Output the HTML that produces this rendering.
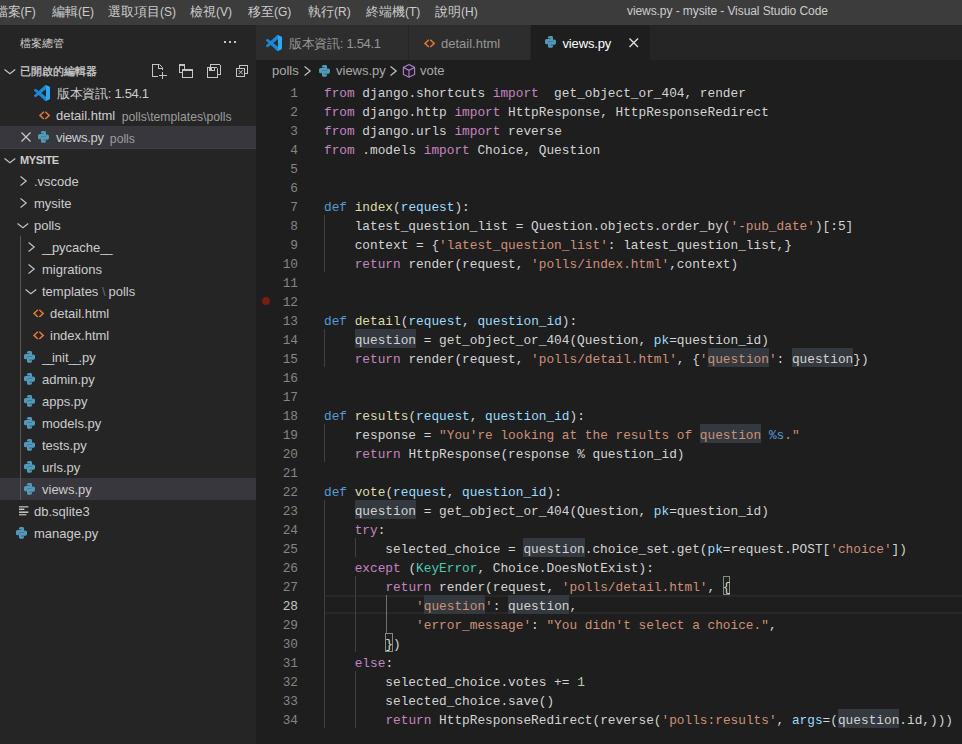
<!DOCTYPE html>
<html><head><meta charset="utf-8">
<style>
*{margin:0;padding:0;box-sizing:border-box}
html,body{width:962px;height:744px;overflow:hidden;background:#1e1e1e;font-family:"Liberation Sans",sans-serif;color:#cccccc}
.a{position:absolute;white-space:nowrap}
.ic{position:absolute;overflow:visible}
#title{position:absolute;left:0;top:0;width:962px;height:25px;background:#3c3c3c}
.m{position:absolute;top:4px;font-size:12px;line-height:15px;white-space:nowrap;color:#cccccc}
.cj{font-style:normal;font-size:12.8px}
#side{position:absolute;left:0;top:25px;width:256px;height:719px;background:#252526}
.u{letter-spacing:-2.3px}
.sel{position:absolute;left:0;width:256px;height:22px;background:#37373d}
.r{position:absolute;font-size:13px;line-height:16px;white-space:nowrap;color:#cccccc}
.desc{color:#9d9d9d;font-size:12.2px;margin-left:6.5px;position:relative;top:1px}
#tabs{position:absolute;left:256px;top:25px;width:706px;height:35px;background:#252526}
.tab{position:absolute;top:25px;height:35px;background:#2d2d2d}
.tt{position:absolute;font-size:13px;line-height:16px;white-space:nowrap;color:#969696}
.ln{position:absolute;left:256px;width:42px;text-align:right;color:#858585;height:19px;line-height:19px;font-family:"Liberation Mono",monospace;font-size:12.79px}
.ln.act{color:#c6c6c6}
.cl{position:absolute;left:324px;height:19px;line-height:19px;white-space:pre;color:#d4d4d4;font-family:"Liberation Mono",monospace;font-size:12.79px}
.k{color:#c586c0}.d{color:#569cd6}.f{color:#dcdcaa}.p{color:#9cdcfe}.s{color:#ce9178}.n{color:#b5cea8}.c{color:#4ec9b0}
.hlb{position:absolute;height:19px;background:#33393f}
.bmb{position:absolute;height:19px;border:1px solid #888888;background:#1b231b}
.ig{position:absolute;width:1px;background:#404040}
.ig.act{background:#707070}
.lhl{position:absolute;left:324px;top:595px;width:638px;height:19px;border-top:2px solid #282828;border-bottom:2px solid #282828}
.bp{position:absolute;left:261.5px;top:297px;width:8px;height:8px;border-radius:50%;background:#781c14}
</style></head><body>
<div id="title"></div>
<span class="m" style="left:-5.5px"><i class="cj">檔案</i>(F)</span>
<span class="m" style="left:52px"><i class="cj">編輯</i>(E)</span>
<span class="m" style="left:108px"><i class="cj">選取項目</i>(S)</span>
<span class="m" style="left:190px"><i class="cj">檢視</i>(V)</span>
<span class="m" style="left:248px"><i class="cj">移至</i>(G)</span>
<span class="m" style="left:308px"><i class="cj">執行</i>(R)</span>
<span class="m" style="left:366px"><i class="cj">終端機</i>(T)</span>
<span class="m" style="left:435px"><i class="cj">說明</i>(H)</span>
<span class="m" style="left:627px;letter-spacing:-0.08px">views.py - mysite - Visual Studio Code</span>

<div id="side"></div>
<span class="r" style="left:20px;top:35px;font-size:11px">檔案總管</span>
<span class="r" style="left:20px;top:63px;font-size:11px;font-weight:normal;-webkit-text-stroke:0.3px #cccccc">已開啟的編輯器</span>
<span class="r" style="left:57px;top:85.8px;letter-spacing:-0.3px">版本資訊: 1.54.1</span>
<span class="r" style="left:56px;top:107.8px">detail.html<span class="desc">polls\templates\polls</span></span>
<div class="sel" style="top:126px"></div>
<span class="r" style="left:56px;top:129.8px"><span style="letter-spacing:-0.25px">views.py</span><span class="desc" style="margin-left:6px">polls</span></span>
<div class="a" style="left:0;top:148px;width:256px;height:1px;background:#3f3f46"></div>
<span class="r" style="left:20px;top:152px;font-size:11px;font-weight:bold;letter-spacing:-0.35px">MYSITE</span>
<span class="r" style="left:34px;top:174px">.vscode</span>
<span class="r" style="left:34px;top:196px">mysite</span>
<span class="r" style="left:34px;top:218px">polls</span>
<span class="r" style="left:42px;top:240px"><span class="u">__</span>pycache<span class="u">__</span></span>
<span class="r" style="left:42px;top:262px">migrations</span>
<span class="r" style="left:42px;top:284px">templates<span style="color:#6b6b6b;padding:0 3px 0 3.5px">\</span>polls</span>
<span class="r" style="left:50px;top:306px">detail.html</span>
<span class="r" style="left:50px;top:328px">index.html</span>
<span class="r" style="left:42px;top:350px"><span class="u">__</span>init<span class="u">__</span>.py</span>
<span class="r" style="left:42px;top:372px">admin.py</span>
<span class="r" style="left:42px;top:394px">apps.py</span>
<span class="r" style="left:42px;top:416px">models.py</span>
<span class="r" style="left:42px;top:438px">tests.py</span>
<span class="r" style="left:42px;top:460px">urls.py</span>
<div class="sel" style="top:478px"></div>
<span class="r" style="left:42px;top:482px">views.py</span>
<span class="r" style="left:34px;top:504px">db.sqlite3</span>
<span class="r" style="left:34px;top:526px">manage.py</span>
<div class="a" style="left:20px;top:236px;width:1px;height:264px;background:#585858"></div>

<div id="tabs"></div>
<div class="tab" style="left:256px;width:152px"></div>
<div class="tab" style="left:409px;width:121px"></div>
<div class="tab" style="left:531px;width:119px;background:#1e1e1e"></div>
<span class="tt" style="left:289px;top:35.8px;letter-spacing:-0.3px">版本資訊: 1.54.1</span>
<span class="tt" style="left:441px;top:35.6px">detail.html</span>
<span class="tt" style="left:562.5px;top:35.6px;color:#ffffff;letter-spacing:-0.15px">views.py</span>

<span class="r" style="left:272px;top:63px;color:#a9a9a9">polls</span>
<span class="r" style="left:336px;top:63px;color:#a9a9a9">views.py</span>
<span class="r" style="left:420px;top:63px;color:#a9a9a9">vote</span>

<div class="lhl"></div>
<div class="ig" style="left:324px;top:215px;height:57px"></div>
<div class="ig" style="left:324px;top:329px;height:38px"></div>
<div class="ig" style="left:324px;top:424px;height:38px"></div>
<div class="ig" style="left:324px;top:500px;height:228px"></div>
<div class="ig" style="left:355px;top:538px;height:19px"></div>
<div class="ig" style="left:355px;top:576px;height:76px"></div>
<div class="ig" style="left:355px;top:671px;height:57px"></div>
<div class="ig act" style="left:386px;top:595px;height:38px"></div>
<div class="bp"></div>
<svg class="ic" style="left:0;top:0" width="256" height="100" viewBox="0 0 256 100"><g fill="#c5c5c5" shape-rendering="crispEdges"><rect x="152" y="64" width="1" height="13"/><rect x="152" y="64" width="7" height="1"/><rect x="158" y="64" width="1" height="5"/><rect x="158" y="68" width="5" height="1"/><rect x="162" y="68" width="1" height="2"/><rect x="152" y="76" width="6" height="1"/><rect x="159" y="75" width="8" height="1"/><rect x="162" y="72" width="1" height="7"/><rect x="179" y="64" width="6" height="2"/><rect x="179" y="64" width="1" height="9"/><rect x="184" y="64" width="1" height="5"/><rect x="179" y="72" width="3" height="1"/><rect x="182" y="69" width="11" height="2"/><rect x="182" y="69" width="1" height="9"/><rect x="192" y="69" width="1" height="9"/><rect x="182" y="77" width="11" height="1"/><rect x="210" y="64" width="10" height="1"/><rect x="210" y="64" width="1" height="3"/><rect x="220" y="65" width="1" height="10"/><rect x="218" y="74" width="3" height="1"/><rect x="207" y="67" width="10" height="1"/><rect x="207" y="67" width="1" height="11"/><rect x="217" y="69" width="1" height="9"/><rect x="207" y="77" width="11" height="1"/><rect x="209" y="67" width="6" height="4"/><rect x="239" y="65" width="9" height="1"/><rect x="239" y="65" width="1" height="3"/><rect x="247" y="65" width="1" height="9"/><rect x="245" y="73" width="3" height="1"/><rect x="236" y="68" width="9" height="1"/><rect x="236" y="68" width="1" height="9"/><rect x="244" y="68" width="1" height="9"/><rect x="236" y="76" width="9" height="1"/></g><rect x="212" y="68" width="2" height="2" fill="#252526" shape-rendering="crispEdges"/><g stroke="#c5c5c5" stroke-width="1" fill="none"><path d="M159.3 64.3L162.7 67.7"/><path d="M216.3 67.3L217.7 68.7"/><path d="M238.7 70.2L242.7 74.2M242.7 70.2L238.7 74.2"/></g><g fill="#c5c5c5"><rect x="224" y="41" width="2" height="2"/><rect x="229" y="41" width="2" height="2"/><rect x="234" y="41" width="2" height="2"/></g></svg>
<svg class="ic" style="left:4.4px;top:69.2px" width="12" height="6" viewBox="0 0 12 6"><path d="M0.55 0.55L5.9 4.7L11.25 0.55" stroke="#c5c5c5" stroke-width="1.15" fill="none"/></svg>
<svg class="ic" style="left:34px;top:85px" width="16" height="16" viewBox="0 0 100 100"><path fill="#1a88d6" d="M96.46 10.8L75.86.87a6.23 6.23 0 0 0-7.1 1.2L29.35 38.04 12.19 25.01a4.16 4.16 0 0 0-5.32.24L1.36 30.26a4.17 4.17 0 0 0 0 6.16L16.25 50 1.36 63.58a4.17 4.17 0 0 0 0 6.16l5.5 5a4.16 4.16 0 0 0 5.32.24l17.16-13.02L68.76 97.9a6.22 6.22 0 0 0 7.1 1.2l20.6-9.92A6.25 6.25 0 0 0 100 83.56V16.44a6.25 6.25 0 0 0-3.54-5.64zM75.01 72.7L45.11 50l29.9-22.7z"/><path fill="#2fa6f2" d="M75.86.87a6.23 6.23 0 0 0-7.1 1.2L75 4V96l-6.24 1.9a6.22 6.22 0 0 0 7.1 1.2l20.6-9.92A6.25 6.25 0 0 0 100 83.56V16.44a6.25 6.25 0 0 0-3.54-5.64z"/></svg>
<svg class="ic" style="left:38.5px;top:110.5px" width="12" height="9" viewBox="0 0 12 9"><path d="M4.9 0.8L1 4.4L4.9 8M6.3 0.8L10.2 4.4L6.3 8" fill="none" stroke="#e37933" stroke-width="1.5"/></svg>
<svg class="ic" style="left:21px;top:132px" width="10" height="10" viewBox="0 0 10 10"><path d="M0.5 0.5L9.5 9.5M9.5 0.5L0.5 9.5" stroke="#cccccc" stroke-width="1.2" fill="none"/></svg>
<svg class="ic" style="left:38px;top:131px" width="11" height="11.7" viewBox="0 0 11 11.7"><g fill="#519aba"><path d="M2.9 1.6Q2.9 0 4.5 0H6.5Q8 0 8 1.5V5.2Q8 5.8 7.4 5.8H3.8Q2.9 5.8 2.9 6.7V8.3H1.6Q0 8.3 0 6.7V4.6Q0 3 1.6 3H5.6V2.5H2.9Z"/><path d="M8.1 10.1Q8.1 11.7 6.5 11.7H4.5Q3 11.7 3 10.2V6.5Q3 5.9 3.6 5.9H7.2Q8.1 5.9 8.1 5V3.4H9.4Q11 3.4 11 5V7.1Q11 8.7 9.4 8.7H5.4V9.2H8.1Z"/></g></svg>
<svg class="ic" style="left:4px;top:157.8px" width="12" height="6" viewBox="0 0 12 6"><path d="M0.55 0.55L5.9 4.7L11.25 0.55" stroke="#c5c5c5" stroke-width="1.15" fill="none"/></svg>
<svg class="ic" style="left:19.9px;top:176px" width="7" height="10" viewBox="0 0 7 10"><path d="M0.55 0.55L6.2 5L0.55 9.45" stroke="#c5c5c5" stroke-width="1.15" fill="none"/></svg>
<svg class="ic" style="left:19.9px;top:198px" width="7" height="10" viewBox="0 0 7 10"><path d="M0.55 0.55L6.2 5L0.55 9.45" stroke="#c5c5c5" stroke-width="1.15" fill="none"/></svg>
<svg class="ic" style="left:17.1px;top:222.8px" width="12" height="6" viewBox="0 0 12 6"><path d="M0.55 0.55L5.9 4.7L11.25 0.55" stroke="#c5c5c5" stroke-width="1.15" fill="none"/></svg>
<svg class="ic" style="left:27.8px;top:241.8px" width="7" height="10" viewBox="0 0 7 10"><path d="M0.55 0.55L6.2 5L0.55 9.45" stroke="#c5c5c5" stroke-width="1.15" fill="none"/></svg>
<svg class="ic" style="left:27.8px;top:263.8px" width="7" height="10" viewBox="0 0 7 10"><path d="M0.55 0.55L6.2 5L0.55 9.45" stroke="#c5c5c5" stroke-width="1.15" fill="none"/></svg>
<svg class="ic" style="left:25.1px;top:288.8px" width="12" height="6" viewBox="0 0 12 6"><path d="M0.55 0.55L5.9 4.7L11.25 0.55" stroke="#c5c5c5" stroke-width="1.15" fill="none"/></svg>
<svg class="ic" style="left:33px;top:309px" width="12" height="9" viewBox="0 0 12 9"><path d="M4.9 0.8L1 4.4L4.9 8M6.3 0.8L10.2 4.4L6.3 8" fill="none" stroke="#e37933" stroke-width="1.5"/></svg>
<svg class="ic" style="left:33px;top:331px" width="12" height="9" viewBox="0 0 12 9"><path d="M4.9 0.8L1 4.4L4.9 8M6.3 0.8L10.2 4.4L6.3 8" fill="none" stroke="#e37933" stroke-width="1.5"/></svg>
<svg class="ic" style="left:24px;top:351.4px" width="11" height="11.7" viewBox="0 0 11 11.7"><g fill="#519aba"><path d="M2.9 1.6Q2.9 0 4.5 0H6.5Q8 0 8 1.5V5.2Q8 5.8 7.4 5.8H3.8Q2.9 5.8 2.9 6.7V8.3H1.6Q0 8.3 0 6.7V4.6Q0 3 1.6 3H5.6V2.5H2.9Z"/><path d="M8.1 10.1Q8.1 11.7 6.5 11.7H4.5Q3 11.7 3 10.2V6.5Q3 5.9 3.6 5.9H7.2Q8.1 5.9 8.1 5V3.4H9.4Q11 3.4 11 5V7.1Q11 8.7 9.4 8.7H5.4V9.2H8.1Z"/></g></svg>
<svg class="ic" style="left:24px;top:373.4px" width="11" height="11.7" viewBox="0 0 11 11.7"><g fill="#519aba"><path d="M2.9 1.6Q2.9 0 4.5 0H6.5Q8 0 8 1.5V5.2Q8 5.8 7.4 5.8H3.8Q2.9 5.8 2.9 6.7V8.3H1.6Q0 8.3 0 6.7V4.6Q0 3 1.6 3H5.6V2.5H2.9Z"/><path d="M8.1 10.1Q8.1 11.7 6.5 11.7H4.5Q3 11.7 3 10.2V6.5Q3 5.9 3.6 5.9H7.2Q8.1 5.9 8.1 5V3.4H9.4Q11 3.4 11 5V7.1Q11 8.7 9.4 8.7H5.4V9.2H8.1Z"/></g></svg>
<svg class="ic" style="left:24px;top:395.4px" width="11" height="11.7" viewBox="0 0 11 11.7"><g fill="#519aba"><path d="M2.9 1.6Q2.9 0 4.5 0H6.5Q8 0 8 1.5V5.2Q8 5.8 7.4 5.8H3.8Q2.9 5.8 2.9 6.7V8.3H1.6Q0 8.3 0 6.7V4.6Q0 3 1.6 3H5.6V2.5H2.9Z"/><path d="M8.1 10.1Q8.1 11.7 6.5 11.7H4.5Q3 11.7 3 10.2V6.5Q3 5.9 3.6 5.9H7.2Q8.1 5.9 8.1 5V3.4H9.4Q11 3.4 11 5V7.1Q11 8.7 9.4 8.7H5.4V9.2H8.1Z"/></g></svg>
<svg class="ic" style="left:24px;top:417.4px" width="11" height="11.7" viewBox="0 0 11 11.7"><g fill="#519aba"><path d="M2.9 1.6Q2.9 0 4.5 0H6.5Q8 0 8 1.5V5.2Q8 5.8 7.4 5.8H3.8Q2.9 5.8 2.9 6.7V8.3H1.6Q0 8.3 0 6.7V4.6Q0 3 1.6 3H5.6V2.5H2.9Z"/><path d="M8.1 10.1Q8.1 11.7 6.5 11.7H4.5Q3 11.7 3 10.2V6.5Q3 5.9 3.6 5.9H7.2Q8.1 5.9 8.1 5V3.4H9.4Q11 3.4 11 5V7.1Q11 8.7 9.4 8.7H5.4V9.2H8.1Z"/></g></svg>
<svg class="ic" style="left:24px;top:439.4px" width="11" height="11.7" viewBox="0 0 11 11.7"><g fill="#519aba"><path d="M2.9 1.6Q2.9 0 4.5 0H6.5Q8 0 8 1.5V5.2Q8 5.8 7.4 5.8H3.8Q2.9 5.8 2.9 6.7V8.3H1.6Q0 8.3 0 6.7V4.6Q0 3 1.6 3H5.6V2.5H2.9Z"/><path d="M8.1 10.1Q8.1 11.7 6.5 11.7H4.5Q3 11.7 3 10.2V6.5Q3 5.9 3.6 5.9H7.2Q8.1 5.9 8.1 5V3.4H9.4Q11 3.4 11 5V7.1Q11 8.7 9.4 8.7H5.4V9.2H8.1Z"/></g></svg>
<svg class="ic" style="left:24px;top:461.4px" width="11" height="11.7" viewBox="0 0 11 11.7"><g fill="#519aba"><path d="M2.9 1.6Q2.9 0 4.5 0H6.5Q8 0 8 1.5V5.2Q8 5.8 7.4 5.8H3.8Q2.9 5.8 2.9 6.7V8.3H1.6Q0 8.3 0 6.7V4.6Q0 3 1.6 3H5.6V2.5H2.9Z"/><path d="M8.1 10.1Q8.1 11.7 6.5 11.7H4.5Q3 11.7 3 10.2V6.5Q3 5.9 3.6 5.9H7.2Q8.1 5.9 8.1 5V3.4H9.4Q11 3.4 11 5V7.1Q11 8.7 9.4 8.7H5.4V9.2H8.1Z"/></g></svg>
<svg class="ic" style="left:24px;top:483.4px" width="11" height="11.7" viewBox="0 0 11 11.7"><g fill="#519aba"><path d="M2.9 1.6Q2.9 0 4.5 0H6.5Q8 0 8 1.5V5.2Q8 5.8 7.4 5.8H3.8Q2.9 5.8 2.9 6.7V8.3H1.6Q0 8.3 0 6.7V4.6Q0 3 1.6 3H5.6V2.5H2.9Z"/><path d="M8.1 10.1Q8.1 11.7 6.5 11.7H4.5Q3 11.7 3 10.2V6.5Q3 5.9 3.6 5.9H7.2Q8.1 5.9 8.1 5V3.4H9.4Q11 3.4 11 5V7.1Q11 8.7 9.4 8.7H5.4V9.2H8.1Z"/></g></svg>
<svg class="ic" style="left:19.3px;top:506.3px" width="10" height="10" viewBox="0 0 10 10"><g stroke-width="1.5"><path d="M0 0.8H9.4" stroke="#a8a8a8"/><path d="M0 3.3H5.4" stroke="#c8c8c8"/><path d="M0 6.2H9.4" stroke="#c8c8c8"/><path d="M0 8.7H7.4" stroke="#a8a8a8"/></g></svg>
<svg class="ic" style="left:16px;top:527px" width="11" height="11.7" viewBox="0 0 11 11.7"><g fill="#519aba"><path d="M2.9 1.6Q2.9 0 4.5 0H6.5Q8 0 8 1.5V5.2Q8 5.8 7.4 5.8H3.8Q2.9 5.8 2.9 6.7V8.3H1.6Q0 8.3 0 6.7V4.6Q0 3 1.6 3H5.6V2.5H2.9Z"/><path d="M8.1 10.1Q8.1 11.7 6.5 11.7H4.5Q3 11.7 3 10.2V6.5Q3 5.9 3.6 5.9H7.2Q8.1 5.9 8.1 5V3.4H9.4Q11 3.4 11 5V7.1Q11 8.7 9.4 8.7H5.4V9.2H8.1Z"/></g></svg>
<svg class="ic" style="left:266px;top:35px" width="16" height="16" viewBox="0 0 100 100"><path fill="#1a88d6" d="M96.46 10.8L75.86.87a6.23 6.23 0 0 0-7.1 1.2L29.35 38.04 12.19 25.01a4.16 4.16 0 0 0-5.32.24L1.36 30.26a4.17 4.17 0 0 0 0 6.16L16.25 50 1.36 63.58a4.17 4.17 0 0 0 0 6.16l5.5 5a4.16 4.16 0 0 0 5.32.24l17.16-13.02L68.76 97.9a6.22 6.22 0 0 0 7.1 1.2l20.6-9.92A6.25 6.25 0 0 0 100 83.56V16.44a6.25 6.25 0 0 0-3.54-5.64zM75.01 72.7L45.11 50l29.9-22.7z"/><path fill="#2fa6f2" d="M75.86.87a6.23 6.23 0 0 0-7.1 1.2L75 4V96l-6.24 1.9a6.22 6.22 0 0 0 7.1 1.2l20.6-9.92A6.25 6.25 0 0 0 100 83.56V16.44a6.25 6.25 0 0 0-3.54-5.64z"/></svg>
<svg class="ic" style="left:423.5px;top:38.5px" width="12" height="9" viewBox="0 0 12 9"><path d="M4.9 0.8L1 4.4L4.9 8M6.3 0.8L10.2 4.4L6.3 8" fill="none" stroke="#e37933" stroke-width="1.5"/></svg>
<svg class="ic" style="left:545px;top:36.2px" width="11" height="11.7" viewBox="0 0 11 11.7"><g fill="#519aba"><path d="M2.9 1.6Q2.9 0 4.5 0H6.5Q8 0 8 1.5V5.2Q8 5.8 7.4 5.8H3.8Q2.9 5.8 2.9 6.7V8.3H1.6Q0 8.3 0 6.7V4.6Q0 3 1.6 3H5.6V2.5H2.9Z"/><path d="M8.1 10.1Q8.1 11.7 6.5 11.7H4.5Q3 11.7 3 10.2V6.5Q3 5.9 3.6 5.9H7.2Q8.1 5.9 8.1 5V3.4H9.4Q11 3.4 11 5V7.1Q11 8.7 9.4 8.7H5.4V9.2H8.1Z"/></g></svg>
<svg class="ic" style="left:629px;top:38.4px" width="9.5" height="9.5" viewBox="0 0 9.5 9.5"><path d="M0.5 0.5L9.0 9.0M9.0 0.5L0.5 9.0" stroke="#e0e0e0" stroke-width="1.4" fill="none"/></svg>
<svg class="ic" style="left:303.9px;top:66.1px" width="7" height="10" viewBox="0 0 7 10"><path d="M0.55 0.55L6.2 5L0.55 9.45" stroke="#c5c5c5" stroke-width="1.15" fill="none"/></svg>
<svg class="ic" style="left:319px;top:65px" width="11" height="11.7" viewBox="0 0 11 11.7"><g fill="#519aba"><path d="M2.9 1.6Q2.9 0 4.5 0H6.5Q8 0 8 1.5V5.2Q8 5.8 7.4 5.8H3.8Q2.9 5.8 2.9 6.7V8.3H1.6Q0 8.3 0 6.7V4.6Q0 3 1.6 3H5.6V2.5H2.9Z"/><path d="M8.1 10.1Q8.1 11.7 6.5 11.7H4.5Q3 11.7 3 10.2V6.5Q3 5.9 3.6 5.9H7.2Q8.1 5.9 8.1 5V3.4H9.4Q11 3.4 11 5V7.1Q11 8.7 9.4 8.7H5.4V9.2H8.1Z"/></g></svg>
<svg class="ic" style="left:390.2px;top:66.1px" width="7" height="10" viewBox="0 0 7 10"><path d="M0.55 0.55L6.2 5L0.55 9.45" stroke="#c5c5c5" stroke-width="1.15" fill="none"/></svg>
<svg class="ic" style="left:402px;top:64px" width="14" height="14" viewBox="0 0 14 14"><g fill="none" stroke="#b180d7" stroke-width="1.1"><path d="M7 0.6L12.6 3.4V10.4L7 13.2L1.4 10.4V3.4Z"/><path d="M1.4 3.4L7 6.3L12.6 3.4M7 6.3V13.2"/></g></svg>
<div class="hlb" style="left:354.68px;top:329px;width:61.36px"></div>
<div class="hlb" style="left:707.50px;top:348px;width:61.36px"></div>
<div class="hlb" style="left:791.87px;top:348px;width:61.36px"></div>
<div class="hlb" style="left:699.83px;top:424px;width:61.36px"></div>
<div class="hlb" style="left:354.68px;top:500px;width:61.36px"></div>
<div class="hlb" style="left:523.42px;top:538px;width:61.36px"></div>
<div class="bmb" style="left:722.84px;top:576px;width:7.67px"></div>
<div class="hlb" style="left:423.71px;top:595px;width:61.36px"></div>
<div class="hlb" style="left:508.08px;top:595px;width:61.36px"></div>
<div class="bmb" style="left:385.36px;top:633px;width:7.67px"></div>
<div class="hlb" style="left:837.89px;top:709px;width:61.36px"></div>
<div class="ln" style="top:84px">1</div>
<div class="cl" style="top:84px"><span class="k">from</span> django.shortcuts <span class="k">import</span>  get_object_or_404, render</div>
<div class="ln" style="top:103px">2</div>
<div class="cl" style="top:103px"><span class="k">from</span> django.http <span class="k">import</span> HttpResponse, HttpResponseRedirect</div>
<div class="ln" style="top:122px">3</div>
<div class="cl" style="top:122px"><span class="k">from</span> django.urls <span class="k">import</span> reverse</div>
<div class="ln" style="top:141px">4</div>
<div class="cl" style="top:141px"><span class="k">from</span> .models <span class="k">import</span> Choice, Question</div>
<div class="ln" style="top:160px">5</div>
<div class="cl" style="top:160px"></div>
<div class="ln" style="top:179px">6</div>
<div class="cl" style="top:179px"></div>
<div class="ln" style="top:198px">7</div>
<div class="cl" style="top:198px"><span class="d">def</span> <span class="f">index</span>(<span class="p">request</span>):</div>
<div class="ln" style="top:217px">8</div>
<div class="cl" style="top:217px">    latest_question_list = Question.objects.order_by(<span class="s">'-pub_date'</span>)[:5]</div>
<div class="ln" style="top:236px">9</div>
<div class="cl" style="top:236px">    context = {<span class="s">'latest_question_list'</span>: latest_question_list,}</div>
<div class="ln" style="top:255px">10</div>
<div class="cl" style="top:255px">    <span class="k">return</span> render(request, <span class="s">'polls/index.html'</span>,context)</div>
<div class="ln" style="top:274px">11</div>
<div class="cl" style="top:274px"></div>
<div class="ln" style="top:293px">12</div>
<div class="cl" style="top:293px"></div>
<div class="ln" style="top:312px">13</div>
<div class="cl" style="top:312px"><span class="d">def</span> <span class="f">detail</span>(<span class="p">request</span>, <span class="p">question_id</span>):</div>
<div class="ln" style="top:331px">14</div>
<div class="cl" style="top:331px">    question = get_object_or_404(Question, <span class="p">pk</span>=question_id)</div>
<div class="ln" style="top:350px">15</div>
<div class="cl" style="top:350px">    <span class="k">return</span> render(request, <span class="s">'polls/detail.html'</span>, {<span class="s">'</span><span class="s">question</span><span class="s">'</span>: question})</div>
<div class="ln" style="top:369px">16</div>
<div class="cl" style="top:369px"></div>
<div class="ln" style="top:388px">17</div>
<div class="cl" style="top:388px"></div>
<div class="ln" style="top:407px">18</div>
<div class="cl" style="top:407px"><span class="d">def</span> <span class="f">results</span>(<span class="p">request</span>, <span class="p">question_id</span>):</div>
<div class="ln" style="top:426px">19</div>
<div class="cl" style="top:426px">    response = <span class="s">"You're looking at the results of </span><span class="s">question</span><span class="s"> </span><span class="d">%s</span><span class="s">."</span></div>
<div class="ln" style="top:445px">20</div>
<div class="cl" style="top:445px">    <span class="k">return</span> HttpResponse(response % question_id)</div>
<div class="ln" style="top:464px">21</div>
<div class="cl" style="top:464px"></div>
<div class="ln" style="top:483px">22</div>
<div class="cl" style="top:483px"><span class="d">def</span> <span class="f">vote</span>(<span class="p">request</span>, <span class="p">question_id</span>):</div>
<div class="ln" style="top:502px">23</div>
<div class="cl" style="top:502px">    question = get_object_or_404(Question, <span class="p">pk</span>=question_id)</div>
<div class="ln" style="top:521px">24</div>
<div class="cl" style="top:521px">    <span class="k">try</span>:</div>
<div class="ln" style="top:540px">25</div>
<div class="cl" style="top:540px">        selected_choice = question.choice_set.get(<span class="p">pk</span>=request.POST[<span class="s">'choice'</span>])</div>
<div class="ln" style="top:559px">26</div>
<div class="cl" style="top:559px">    <span class="k">except</span> (<span class="c">KeyError</span>, Choice.DoesNotExist):</div>
<div class="ln" style="top:578px">27</div>
<div class="cl" style="top:578px">        <span class="k">return</span> render(request, <span class="s">'polls/detail.html'</span>, {</div>
<div class="ln act" style="top:597px">28</div>
<div class="cl" style="top:597px">            <span class="s">'</span><span class="s">question</span><span class="s">'</span>: question,</div>
<div class="ln" style="top:616px">29</div>
<div class="cl" style="top:616px">            <span class="s">'error_message'</span>: <span class="s">"You didn't select a choice."</span>,</div>
<div class="ln" style="top:635px">30</div>
<div class="cl" style="top:635px">        })</div>
<div class="ln" style="top:654px">31</div>
<div class="cl" style="top:654px">    <span class="k">else</span>:</div>
<div class="ln" style="top:673px">32</div>
<div class="cl" style="top:673px">        selected_choice.votes += <span class="n">1</span></div>
<div class="ln" style="top:692px">33</div>
<div class="cl" style="top:692px">        selected_choice.save()</div>
<div class="ln" style="top:711px">34</div>
<div class="cl" style="top:711px">        <span class="k">return</span> HttpResponseRedirect(reverse(<span class="s">'polls:results'</span>, <span class="p">args</span>=(question.id,)))</div>
</body></html>
